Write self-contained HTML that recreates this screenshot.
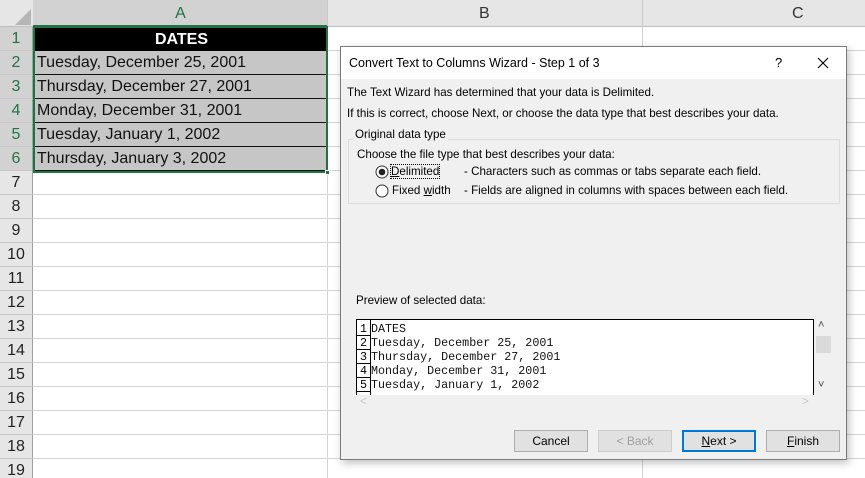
<!DOCTYPE html><html><head><style>
*{margin:0;padding:0;box-sizing:border-box}
html,body{width:865px;height:478px;overflow:hidden}
body{background:#fff;position:relative;font-family:"Liberation Sans",sans-serif}
.a{position:absolute}
.hdr{background:#e6e6e6}
.rh{position:absolute;left:0;width:33px;height:24px;background:#e6e6e6;border-bottom:1px solid #c8c8c8;border-right:1px solid #a0a0a0;text-align:center;font-size:16px;line-height:24px;color:#222}
.grid{position:absolute;left:33px;top:27px;width:832px;height:451px;background-image:repeating-linear-gradient(to bottom,transparent 0 23px,#d4d4d4 23px 24px)}
.vl{position:absolute;top:0;width:1px;height:451px;background:#d4d4d4}
.cell{position:absolute;left:34px;width:292px;height:24px;background:#c6c6c6;border-bottom:1px solid #111;font-size:16px;line-height:23px;padding-left:3px;color:#111}
.dlg{position:absolute;left:340px;top:46px;width:507px;height:414px;background:#f0f0f0;border:1px solid #7a7a7a;box-shadow:2px 3px 8px rgba(0,0,0,.25);font-size:11.6px;color:#000}
.t{position:absolute;white-space:nowrap}
.btn{position:absolute;top:383px;width:74px;height:22px;background:#e1e1e1;border:1px solid #adadad;text-align:center;line-height:20px;font-size:12px}
.mono{font-family:"Liberation Mono",monospace;font-size:11.7px;line-height:14px}
</style></head><body>
<div class="a hdr" style="left:0;top:0;width:865px;height:27px;border-bottom:1px solid #bdbdbd"></div>
<svg class="a" style="left:14px;top:8px" width="18" height="18"><polygon points="17,1 17,17 1,17" fill="#b5b5b5"/></svg>
<div class="a" style="left:33px;top:0;width:295px;height:27px;background:#d2d2d2;border-bottom:2px solid #217346;text-align:center;line-height:28px;font-size:16px;color:#217346">A</div>
<div class="t" style="left:479px;top:5px;font-size:16px;color:#333">B</div>
<div class="t" style="left:792px;top:5px;font-size:16px;color:#333">C</div>
<div class="vl" style="left:327px;background:#c8c8c8;height:27px"></div>
<div class="vl" style="left:642px;background:#c8c8c8;height:27px"></div>
<div class="grid"></div>
<div class="vl" style="left:327px;top:27px"></div>
<div class="vl" style="left:642px;top:27px"></div>
<div class="rh" style="top:27px;background:#d2d2d2;color:#217346">1</div>
<div class="rh" style="top:51px;background:#d2d2d2;color:#217346">2</div>
<div class="rh" style="top:75px;background:#d2d2d2;color:#217346">3</div>
<div class="rh" style="top:99px;background:#d2d2d2;color:#217346">4</div>
<div class="rh" style="top:123px;background:#d2d2d2;color:#217346">5</div>
<div class="rh" style="top:147px;background:#d2d2d2;color:#217346">6</div>
<div class="rh" style="top:171px">7</div><div class="rh" style="top:195px">8</div><div class="rh" style="top:219px">9</div><div class="rh" style="top:243px">10</div><div class="rh" style="top:267px">11</div><div class="rh" style="top:291px">12</div><div class="rh" style="top:315px">13</div><div class="rh" style="top:339px">14</div><div class="rh" style="top:363px">15</div><div class="rh" style="top:387px">16</div><div class="rh" style="top:411px">17</div><div class="rh" style="top:435px">18</div><div class="rh" style="top:459px">19</div>
<div class="cell" style="top:28px;background:#000;color:#fff;font-weight:bold;text-align:center">DATES</div>
<div class="cell" style="top:51px">Tuesday, December 25, 2001</div>
<div class="cell" style="top:75px">Thursday, December 27, 2001</div>
<div class="cell" style="top:99px">Monday, December 31, 2001</div>
<div class="cell" style="top:123px">Tuesday, January 1, 2002</div>
<div class="cell" style="top:147px">Thursday, January 3, 2002</div>
<div class="a" style="left:33px;top:26px;width:295px;height:147px;border:2px solid #217346"></div>
<div class="a" style="left:325px;top:170px;width:5px;height:5px;background:#217346;border:1px solid #fff"></div>
<div class="dlg">
<div class="a" style="left:0;top:0;width:505px;height:32px;background:#fff"></div>
<div class="t" style="left:8px;top:9px;font-size:12.5px">Convert Text to Columns Wizard - Step 1 of 3</div>
<div class="t" style="left:434px;top:8px;font-size:13px">?</div>
<svg class="a" style="left:476px;top:10px" width="12" height="12"><path d="M1 1L11 11M11 1L1 11" stroke="#000" stroke-width="1.1"/></svg>
<div class="t" style="left:6px;top:39px">The Text Wizard has determined that your data is Delimited.</div>
<div class="t" style="left:6px;top:60px">If this is correct, choose Next, or choose the data type that best describes your data.</div>
<div class="a" style="left:7px;top:92px;width:492px;height:65px;border:1px solid #dcdcdc"></div>
<div class="t" style="left:12px;top:81px;background:#f0f0f0;padding:0 2px">Original data type</div>
<div class="t" style="left:16px;top:101px">Choose the file type that best describes your data:</div>
<svg class="a" style="left:34px;top:118px" width="14" height="14"><circle cx="7" cy="7" r="6" fill="#fff" stroke="#333"/><circle cx="7" cy="7" r="3.3" fill="#222"/></svg>
<div class="t" style="left:50px;top:118px;outline:1px dotted #000"><u>D</u>elimited</div>
<div class="t" style="left:123px;top:118px">- Characters such as commas or tabs separate each field.</div>
<svg class="a" style="left:34px;top:137px" width="14" height="14"><circle cx="7" cy="7" r="6" fill="#fff" stroke="#333"/></svg>
<div class="t" style="left:51px;top:137px">Fixed <u>w</u>idth</div>
<div class="t" style="left:123px;top:137px">- Fields are aligned in columns with spaces between each field.</div>
<div class="t" style="left:15px;top:247px">Preview of selected data:</div>
<div class="a" style="left:15px;top:272px;width:458px;height:76px;background:#fff;border:1px solid #000;border-bottom:none;overflow:hidden">
<div class="a" style="left:0;top:0;width:14px;height:80px;border-right:1px solid #000"></div>
<div class="a mono" style="left:3px;top:2px">1<br>2<br>3<br>4<br>5</div>
<div class="a" style="left:0;top:0;width:14px;height:80px;background:repeating-linear-gradient(to bottom,transparent 0 13px,#000 13px 14px);background-position:0 2px"></div>
<div class="a mono" style="left:14px;top:2px;color:#111">DATES<br>Tuesday, December 25, 2001<br>Thursday, December 27, 2001<br>Monday, December 31, 2001<br>Tuesday, January 1, 2002</div>
</div>
<div class="t" style="left:477px;top:272px;font-size:11px;color:#444">&#x2c4;</div>
<div class="a" style="left:475px;top:289px;width:15px;height:17px;background:#dadada"></div>
<div class="t" style="left:477px;top:332px;font-size:11px;color:#444">&#x2c5;</div>
<div class="t" style="left:19px;top:348px;color:#c8c8c8">&lt;</div>
<div class="t" style="left:461px;top:348px;color:#c8c8c8">&gt;</div>
<div class="btn" style="left:173px">Cancel</div>
<div class="btn" style="left:257px;color:#a0a0a0;border-color:#cdcdcd">&lt; Back</div>
<div class="btn" style="left:341px;border:2px solid #0078d7;line-height:18px"><u>N</u>ext &gt;</div>
<div class="btn" style="left:425px"><u>F</u>inish</div>
</div>
</body></html>
